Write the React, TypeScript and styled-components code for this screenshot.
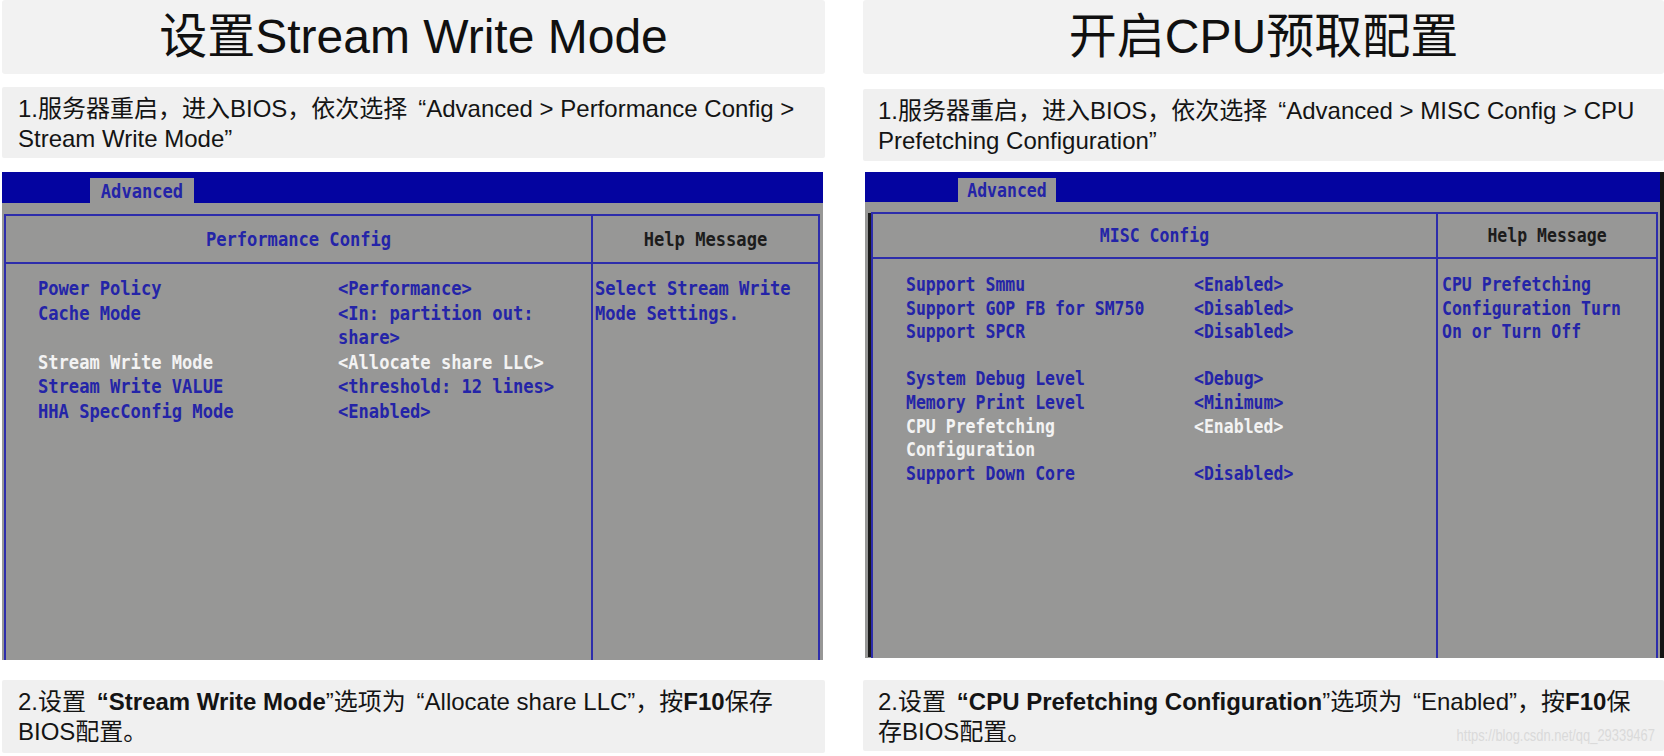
import React from "react";
import styled, { createGlobalStyle } from "styled-components";

const GlobalStyle = createGlobalStyle`
  html, body {
    margin: 0;
    padding: 0;
    background: #ffffff;
  }
  body {
    width: 1664px;
    height: 756px;
    overflow: hidden;
    font-family: "Liberation Sans", "Noto Sans CJK SC", sans-serif;
    color: #111111;
  }
`;

const Page = styled.main`
  display: grid;
  grid-template-columns: 823px 801px;
  column-gap: 38px;
  padding-left: 2px;
  height: 756px;
`;

const Column = styled.section`
  display: flex;
  flex-direction: column;
  min-width: 0;
`;

const Title = styled.h1`
  margin: 0;
  height: 74px;
  flex: none;
  display: flex;
  align-items: center;
  justify-content: center;
  background: #f2f2f2;
  border-radius: 3px;
  font-size: 48px;
  font-weight: 400;
  line-height: 1;
  color: #101010;
`;

const Note = styled.p<{ $top: number; $pl: number; $h: number }>`
  position: relative;
  box-sizing: border-box;
  flex: none;
  height: ${(p) => p.$h}px;
  margin: ${(p) => p.$top}px 0 0;
  padding: 7px 0 0 ${(p) => p.$pl}px;
  background: #f0f0f0;
  border-radius: 2px;
  font-size: 24px;
  line-height: 30px;
  color: #141414;
  white-space: nowrap;
`;

const OpenQuote = styled.span`
  margin-left: 0.45em;
`;

const B = styled.b`
  font-weight: 700;
`;

const Watermark = styled.span`
  position: absolute;
  right: 9px;
  bottom: 6px;
  display: inline-block;
  transform: scaleX(0.76);
  transform-origin: right center;
  font-family: "Liberation Sans", sans-serif;
  font-size: 17px;
  line-height: 18px;
  color: #dadada;
`;

/* ---------- BIOS screen ---------- */

const BIOS_GREY = "#979796";
const BIOS_BLUE = "#0404a0";
const LINE_BLUE = "#2d2dab";
const TEXT_BLUE = "#2424a8";

const Bios = styled.div<{ $mt: number; $ml: number; $mr: number; $h: number; $edge?: boolean; $fs: number }>`
  flex: none;
  margin: ${(p) => p.$mt}px ${(p) => p.$mr}px 0 ${(p) => p.$ml}px;
  height: ${(p) => p.$h}px;
  background: ${BIOS_GREY};
  display: flex;
  flex-direction: column;
  border-right: ${(p) => (p.$edge ? "4px solid #141414" : "none")};
  font-family: "DejaVu Sans Mono", "Liberation Mono", monospace;
  font-weight: 700;
  font-size: ${(p) => p.$fs}px;
  overflow: hidden;
`;

const MenuBar = styled.div<{ $h: number; $tabLeft: number }>`
  height: ${(p) => p.$h}px;
  flex: none;
  background: ${BIOS_BLUE};
  display: flex;
  align-items: flex-end;
  padding-left: ${(p) => p.$tabLeft}px;
`;

const Tab = styled.div<{ $w: number; $h: number }>`
  width: ${(p) => p.$w}px;
  height: ${(p) => p.$h}px;
  background: ${BIOS_GREY};
  color: ${TEXT_BLUE};
  display: flex;
  align-items: center;
  justify-content: center;
`;

const Frame = styled.div<{ $top: number; $ml: number; $mr: number; $cols: string; $head: number; $edge?: boolean }>`
  flex: 1;
  margin: ${(p) => p.$top}px ${(p) => p.$mr}px 0 ${(p) => p.$ml}px;
  border: 2px solid ${LINE_BLUE};
  border-bottom: none;
  display: grid;
  grid-template-columns: ${(p) => p.$cols};
  grid-template-rows: ${(p) => p.$head}px 1fr;
  box-shadow: ${(p) => (p.$edge ? "-4px 0 0 -1px #1a1a1a" : "none")};
`;

const HeadCell = styled.div<{ $divider?: boolean; $dark?: boolean }>`
  border-bottom: 2px solid ${LINE_BLUE};
  border-right: ${(p) => (p.$divider ? `2px solid ${LINE_BLUE}` : "none")};
  display: flex;
  align-items: center;
  justify-content: center;
  color: ${(p) => (p.$dark ? "#1c1c1c" : TEXT_BLUE)};
`;

const BodyCell = styled.div<{ $divider?: boolean; $pl: number; $pt: number }>`
  border-right: ${(p) => (p.$divider ? `2px solid ${LINE_BLUE}` : "none")};
  padding: ${(p) => p.$pt}px 0 0 ${(p) => p.$pl}px;
`;

const Rows = styled.div<{ $valueX: number }>`
  display: grid;
  grid-template-columns: ${(p) => p.$valueX}px 1fr;
`;

const Cell = styled.div<{ $active?: boolean }>`
  color: ${(p) => (p.$active ? "#f3f3f3" : TEXT_BLUE)};
  white-space: pre;
`;

const Line = styled.span<{ $pitch: number }>`
  display: block;
  height: ${(p) => p.$pitch}px;
  line-height: ${(p) => p.$pitch}px;
  transform: scaleY(1.18);
`;

const HeadText = styled.span`
  display: inline-block;
  transform: scaleY(1.18);
`;

type Row = { label: string; value: string; active?: boolean };

type Geo = {
  mt: number;
  ml: number;
  mr: number;
  h: number;
  fs: number;
  bar: number;
  tabLeft: number;
  tabW: number;
  tabH: number;
  frameTop: number;
  frameMl: number;
  frameMr: number;
  cols: string;
  head: number;
  padTop: number;
  labelX: number;
  valueX: number;
  helpX: number;
  pitch: number;
  edge?: boolean;
};

type BiosProps = {
  title: string;
  rows: Row[];
  help: string[];
  geo: Geo;
};

const Lines: React.FC<{ text: string; pitch: number }> = ({ text, pitch }) => (
  <>
    {text.split("\n").map((t, i) => (
      <Line key={i} $pitch={pitch}>
        {t || "\u00a0"}
      </Line>
    ))}
  </>
);

const BiosScreen: React.FC<BiosProps> = ({ title, rows, help, geo }) => (
  <Bios $mt={geo.mt} $ml={geo.ml} $mr={geo.mr} $h={geo.h} $edge={geo.edge} $fs={geo.fs}>
    <MenuBar $h={geo.bar} $tabLeft={geo.tabLeft}>
      <Tab $w={geo.tabW} $h={geo.tabH}>
        <HeadText>Advanced</HeadText>
      </Tab>
    </MenuBar>
    <Frame
      $top={geo.frameTop}
      $ml={geo.frameMl}
      $mr={geo.frameMr}
      $cols={geo.cols}
      $head={geo.head}
      $edge={geo.edge}
    >
      <HeadCell $divider>
        <HeadText>{title}</HeadText>
      </HeadCell>
      <HeadCell $dark>
        <HeadText>Help Message</HeadText>
      </HeadCell>
      <BodyCell $divider $pl={geo.labelX} $pt={geo.padTop}>
        <Rows $valueX={geo.valueX}>
          {rows.map((r, i) => (
            <React.Fragment key={i}>
              <Cell $active={r.active}>
                <Lines text={r.label} pitch={geo.pitch} />
              </Cell>
              <Cell $active={r.active}>
                <Lines text={r.value} pitch={geo.pitch} />
              </Cell>
            </React.Fragment>
          ))}
        </Rows>
      </BodyCell>
      <BodyCell $pl={geo.helpX} $pt={geo.padTop}>
        <Cell>
          <Lines text={help.join("\n")} pitch={geo.pitch} />
        </Cell>
      </BodyCell>
    </Frame>
  </Bios>
);

const leftRows: Row[] = [
  { label: "Power Policy", value: "<Performance>" },
  { label: "Cache Mode", value: "<In: partition out:\nshare>" },
  { label: "Stream Write Mode", value: "<Allocate share LLC>", active: true },
  { label: "Stream Write VALUE", value: "<threshold: 12 lines>" },
  { label: "HHA SpecConfig Mode", value: "<Enabled>" },
];

const rightRows: Row[] = [
  { label: "Support Smmu", value: "<Enabled>" },
  { label: "Support GOP FB for SM750", value: "<Disabled>" },
  { label: "Support SPCR", value: "<Disabled>" },
  { label: "", value: "" },
  { label: "System Debug Level", value: "<Debug>" },
  { label: "Memory Print Level", value: "<Minimum>" },
  { label: "CPU Prefetching\nConfiguration", value: "<Enabled>", active: true },
  { label: "Support Down Core", value: "<Disabled>" },
];

const leftGeo: Geo = {
  mt: 14,
  ml: 0,
  mr: 2,
  h: 488,
  fs: 17.1,
  bar: 31,
  tabLeft: 88,
  tabW: 104,
  tabH: 25,
  frameTop: 11,
  frameMl: 2,
  frameMr: 3,
  cols: "587px 1fr",
  head: 48,
  padTop: 12,
  labelX: 32,
  valueX: 300,
  helpX: 2,
  pitch: 24.6,
};

const rightGeo: Geo = {
  mt: 11,
  ml: 2,
  mr: 0,
  h: 486,
  fs: 16.5,
  bar: 30,
  tabLeft: 93,
  tabW: 98,
  tabH: 24,
  frameTop: 10,
  frameMl: 6,
  frameMr: 2,
  cols: "565px 1fr",
  head: 45,
  padTop: 14,
  labelX: 33,
  valueX: 288,
  helpX: 4,
  pitch: 23.6,
  edge: true,
};

export default function App() {
  return (
    <>
      <GlobalStyle />
      <Page>
        <Column>
          <Title>设置Stream Write Mode</Title>
          <Note $top={13} $pl={16} $h={71}>
            1.服务器重启，进入BIOS，依次选择<OpenQuote>“</OpenQuote>Advanced &gt; Performance Config &gt;
            <br />
            Stream Write Mode”
          </Note>
          <BiosScreen
            title="Performance Config"
            rows={leftRows}
            help={["Select Stream Write", "Mode Settings."]}
            geo={leftGeo}
          />
          <Note $top={20} $pl={16} $h={73}>
            2.设置
            <B>
              <OpenQuote>“</OpenQuote>Stream Write Mode
            </B>
            ”选项为<OpenQuote>“</OpenQuote>Allocate share LLC”，按<B>F10</B>保存
            <br />
            BIOS配置。
          </Note>
        </Column>
        <Column>
          <Title>开启CPU预取配置</Title>
          <Note $top={15} $pl={15} $h={72}>
            1.服务器重启，进入BIOS，依次选择<OpenQuote>“</OpenQuote>Advanced &gt; MISC Config &gt; CPU
            <br />
            Prefetching Configuration”
          </Note>
          <BiosScreen
            title="MISC Config"
            rows={rightRows}
            help={["CPU Prefetching", "Configuration Turn", "On or Turn Off"]}
            geo={rightGeo}
          />
          <Note $top={22} $pl={15} $h={71}>
            2.设置
            <B>
              <OpenQuote>“</OpenQuote>CPU Prefetching Configuration
            </B>
            ”选项为<OpenQuote>“</OpenQuote>Enabled”，按<B>F10</B>保
            <br />
            存BIOS配置。
            <Watermark>https://blog.csdn.net/qq_29339467</Watermark>
          </Note>
        </Column>
      </Page>
    </>
  );
}
